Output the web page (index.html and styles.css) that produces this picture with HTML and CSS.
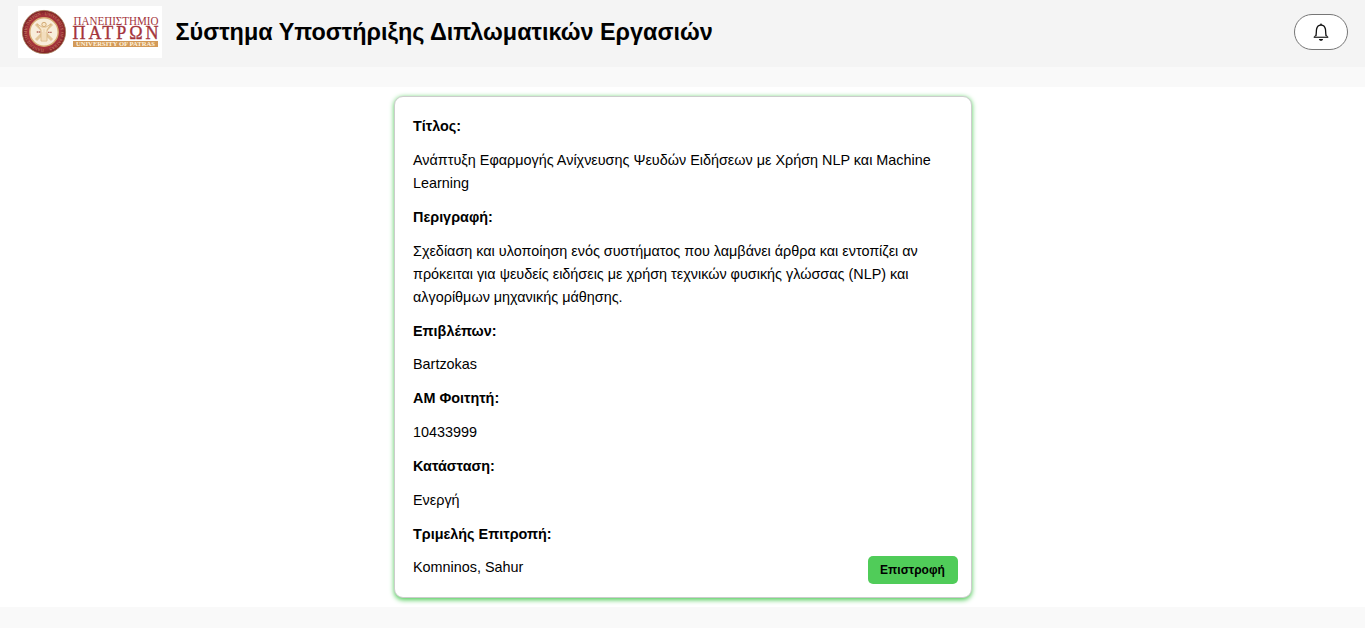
FILE: index.html
```html
<!DOCTYPE html>
<html lang="el">
<head>
<meta charset="utf-8">
<title>Σύστημα Υποστήριξης Διπλωματικών Εργασιών</title>
<link rel="stylesheet" href="styles.css">
</head>
<body>
<header class="header">
  <div class="brand">
    <svg class="logo" viewBox="0 0 144 52" role="img" aria-label="Πανεπιστήμιο Πατρών">
      <defs>
        <path id="ring" d="M26 43a17 17 0 1 1 .1 0"/>
        <radialGradient id="seal"><stop offset="0.75" stop-color="#a5323a"/><stop offset="1" stop-color="#7c2023"/></radialGradient>
      </defs>
      <rect width="144" height="52" fill="#fff"/>
      <circle cx="26" cy="26" r="21.6" fill="url(#seal)" stroke="#a67d58" stroke-width="0.8"/>
      <text class="ring-text"><textPath href="#ring">ΠΑΝΕΠΙΣΤΗΜΙΟ ΠΑΤΡΩΝ · UNIVERSITY OF PATRAS</textPath></text>
      <circle cx="26" cy="26" r="14.2" fill="#f8edda" stroke="#d6ab72" stroke-width="1.4"/>
      <path d="M18 18l16 16M34 18L18 34" stroke="#e3c69a" stroke-width="3"/>
      <circle cx="26" cy="18.5" r="2.2" fill="#f8e5c5" stroke="#c99d62" stroke-width="0.8"/>
      <path d="M24 21h4l5-3-4 6v11h-6V24l-4-6z" fill="#f8e8cd" stroke="#d8b27c" stroke-width="0.8"/>
      <path d="M26 23v11M24 26v8M28 26v8" stroke="#e0bf8d" stroke-width="0.5"/>
      <path d="M18.7 26h4M30 26.3h4" stroke="#b66b5c" stroke-width="1.3" stroke-dasharray="1.6 .5"/>
      <text class="logo-name" x="55.5" y="18.5" font-size="11.5" textLength="85" lengthAdjust="spacingAndGlyphs">ΠΑΝΕΠΙΣΤΗΜΙΟ</text>
      <text class="logo-name logo-city" x="54.5" y="33.2" font-size="18" textLength="86" lengthAdjust="spacing">ΠΑΤΡΩΝ</text>
      <rect x="55" y="35" width="85" height="6" fill="#d39a59"/>
      <text class="logo-sub" x="58" y="40.4" textLength="79" lengthAdjust="spacingAndGlyphs">UNIVERSITY OF PATRAS</text>
    </svg>
    <h1 class="title">Σύστημα Υποστήριξης Διπλωματικών Εργασιών</h1>
  </div>
  <button class="bell" aria-label="Ειδοποιήσεις">
    <svg width="18" height="20" viewBox="0 0 18 20" fill="none">
      <path d="M3.9 14C4.5 11 4.2 9 4.6 7C5.1 4.6 6.7 3.1 9 3.1s3.9 1.500 4.400 3.900c.4 2 .1 4 .7 7" stroke="#111" stroke-width="1.3"/>
      <path d="M1.7 15.300h14.600" stroke="#333" stroke-width="1.3"/>
      <path d="M7.9 2.300h2.200" stroke="#222" stroke-width="1.2"/>
      <path d="M4 13.200L2.300 15.200M14 13.200l1.700 2" stroke="#333" stroke-width="1.1"/>
      <path d="M7 17h4c0 1.100-.8 1.800-2 1.800S7 18.100 7 17z" fill="#111"/>
    </svg>
  </button>
</header>
<main class="content">
  <section class="card">
    <p><b>Τίτλος:</b></p>
    <p>Ανάπτυξη Εφαρμογής Ανίχνευσης Ψευδών Ειδήσεων με Χρήση NLP και Machine Learning</p>
    <p><b>Περιγραφή:</b></p>
    <p>Σχεδίαση και υλοποίηση ενός συστήματος που λαμβάνει άρθρα και εντοπίζει αν πρόκειται για ψευδείς ειδήσεις με χρήση τεχνικών φυσικής γλώσσας (NLP) και αλγορίθμων μηχανικής μάθησης.</p>
    <p><b>Επιβλέπων:</b></p>
    <p>Bartzokas</p>
    <p><b>ΑΜ Φοιτητή:</b></p>
    <p>10433999</p>
    <p><b>Κατάσταση:</b></p>
    <p>Ενεργή</p>
    <p><b>Τριμελής Επιτροπή:</b></p>
    <p>Komninos, Sahur</p>
    <button class="back">Επιστροφή</button>
  </section>
</main>
</body>
</html>
```
FILE: styles.css
```css
* { box-sizing: border-box; }
body {
  margin: 0;
  background: #f9f9f9;
  color: #000;
  font-family: "Liberation Sans", Arial, sans-serif;
}
.header {
  display: flex;
  align-items: center;
  justify-content: space-between;
  height: 67px;
  padding: 0 17px 3px 18px;
  background: #f4f4f4;
}
.brand { display: flex; align-items: center; gap: 13.5px; }
.logo { width: 144px; height: 52px; }
.ring-text { font: 4.2px "Liberation Serif", serif; fill: #d08b6c; }
.logo-name { font-family: "Liberation Serif", serif; fill: #a4343b; }
.logo-city { stroke: #a4343b; stroke-width: 0.3px; }
.logo-sub { font: bold 6px "Liberation Serif", serif; fill: #fff3df; }
.title {
  margin: 0;
  font-size: 23.4px;
  line-height: 28px;
  white-space: nowrap;
}
.bell {
  display: flex;
  align-items: center;
  justify-content: center;
  width: 54px;
  height: 36px;
  padding: 0;
  border: 1px solid #767676;
  border-radius: 18px;
  background: #fff;
}
.content {
  height: 520px;
  margin-top: 20px;
  padding-top: 9px;
  background: #fff;
}
.card {
  position: relative;
  width: 578px;
  height: 502px;
  margin: 0 auto;
  padding: 18px 17.5px 18px 18.5px;
  border: 1px solid #ccc;
  border-radius: 9px;
  background: #fff;
  box-shadow: 0 1.8px 5.4px #50cc59;
  font-size: 14.4px;
  line-height: 1.6;
}
.card p { margin: 0 0 10.8px; }
.back {
  position: absolute;
  right: 13px;
  bottom: 13px;
  width: 90px;
  height: 28px;
  padding: 0;
  border: 0;
  border-radius: 5px;
  background: #50cc59;
  color: #000;
  font: bold 12px "Liberation Sans", Arial, sans-serif;
}
```
